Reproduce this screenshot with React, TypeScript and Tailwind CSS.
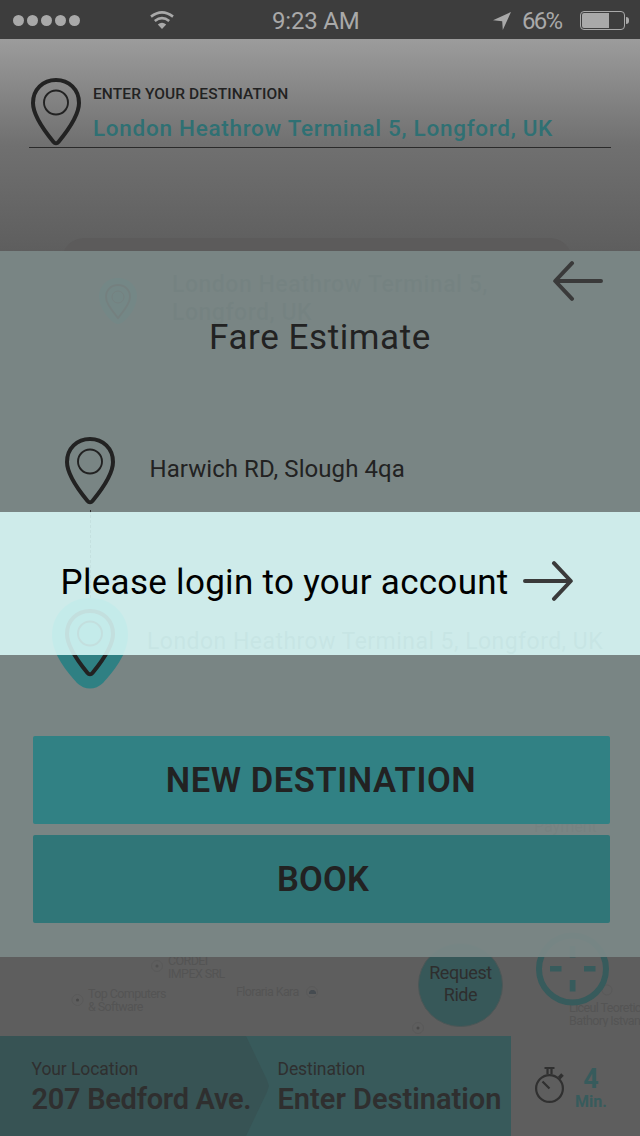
function Pin({ className = "" }: { className?: string }) {
  return (
    <svg viewBox="0 0 50 68" className={`h-[68px] w-[50px] shrink-0 ${className}`} fill="none" stroke="#222" strokeLinejoin="round">
      <path strokeWidth="4" d="M25 2C12 2 2 11.500 2 25C2 39 16 56 22.300 63.700Q25 67 27.700 63.700C34 56 48 39 48 25C48 11.500 38 2 25 2Z" />
      <circle cx="25" cy="24.500" r="12" strokeWidth="1.900" />
    </svg>
  );
}

function Arrow({ className = "" }: { className?: string }) {
  return (
    <svg viewBox="0 0 50 40" className={`h-10 w-[50px] shrink-0 ${className}`} fill="none" stroke="#3a3a3a" strokeWidth="4" strokeLinecap="round" strokeLinejoin="round">
      <path d="M2 20H47.500M31 2.200L47.800 20L31 37.800" />
    </svg>
  );
}

function StatusBar() {
  return (
    <div className="flex h-[39px] shrink-0 items-center bg-[#3d3d3d] pl-[13px] text-[24px] leading-[39px] text-[#a9a9a9]">
      <div className="flex w-[137px] gap-[3px] pt-[2px]">
        {[0, 1, 2, 3, 4].map((i) => (
          <span key={i} className="size-[11px] rounded-full bg-[#a9a9a9]" />
        ))}
      </div>
      <svg viewBox="0 0 24 18" className="h-[18px] w-6" fill="none" stroke="#a9a9a9" strokeWidth="2.600">
        <path d="M1 5.600Q12 -2.800 23 5.600" />
        <path d="M4.800 10Q12 4.400 19.200 10" />
        <path d="M7.800 13.600Q12 10 16.200 13.600L12 18Z" fill="#a9a9a9" stroke="none" />
      </svg>
      <span className="ml-[98px] mt-[3px] w-[90px] tracking-[-0.2px]">9:23 AM</span>
      <svg viewBox="0 0 18 18" className="ml-[131px] mt-[2px] h-[18px] w-[18px]" fill="#a9a9a9">
        <path d="M18 0L9.800 18L9.200 9.300L0 8.200Z" />
      </svg>
      <span className="ml-[11px] mt-[3px] w-[46px] tracking-[-1.8px]">66%</span>
      <div className="ml-[12px] mt-[2px] flex h-[19px] w-[45px] rounded-[4px] border border-[#a9a9a9] p-px">
        <span className="w-[27px] rounded-l-[2px] bg-[#a9a9a9]" />
      </div>
      <span className="ml-px mt-[2px] h-[7px] w-[3px] rounded-r-full bg-[#a9a9a9]" />
    </div>
  );
}

function MapLayer() {
  return (
    <div className="absolute inset-0 text-[12.5px] leading-[13px] tracking-[-0.6px] text-[#545454]">
      <div className="absolute left-[62px] top-[238px] h-[110px] w-[510px] rounded-[22px] bg-[#5c5b5b] text-[23px] font-medium leading-[28px] tracking-[0.53px] text-[#2a3a3a]">
        <svg viewBox="0 0 38 46" className="absolute left-[37px] top-[40px] h-[46px] w-[38px]" fill="none">
          <path fill="#1f7275" d="M19 0C8 0 0 8 0 18C0 30 9 40 14 44Q19 48 24 44C29 40 38 30 38 18C38 8 30 0 19 0Z" />
          <path stroke="#222" strokeWidth="2" d="M19 7C12 7 7 12 7 19C7 26 14 34 19 40C24 34 31 26 31 19C31 12 26 7 19 7Z" />
          <circle cx="19" cy="19" r="6" stroke="#222" />
        </svg>
        <p className="absolute left-[110px] top-[33px] whitespace-nowrap">London Heathrow Terminal 5,<br />Longford, UK</p>
      </div>
      <span className="absolute left-[534px] top-[817px] text-[16px] leading-5 tracking-normal text-[#333]">Payment</span>
      <span className="absolute left-[168px] top-[954px]">CORDEI<br />IMPEX SRL</span>
      <span className="absolute left-[88px] top-[987px]">Top Computers<br />&amp; Software</span>
      <span className="absolute left-[236px] top-[985px]">Floraria Kara</span>
      <svg viewBox="0 0 640 1136" className="absolute inset-0 h-full w-full" fill="none" stroke="#595959">
        <circle cx="157" cy="966" r="5.500" />
        <circle cx="157" cy="966" r="1.500" fill="#505050" stroke="none" />
        <circle cx="77.500" cy="1000" r="5.500" />
        <circle cx="77.500" cy="1000" r="1.500" fill="#484848" stroke="none" />
        <circle cx="312" cy="992" r="5.500" />
        <path d="M309 994v-2l2-2h3l2 2v2z" fill="#454b50" stroke="none" />
        <circle cx="418" cy="1028" r="5.500" />
        <circle cx="418" cy="1028" r="1.500" fill="#484848" stroke="none" />
        <circle cx="607" cy="990" r="5" />
      </svg>
      <span className="absolute left-[569px] top-[1001px] w-[71px] overflow-hidden whitespace-nowrap">Liceul Teoretic<br />Bathory Istvan</span>
      <div className="absolute left-[418px] top-[943px] flex h-[84px] w-[85px] flex-col items-center rounded-full border border-[#4c5757] bg-[#375859] pt-[18px] text-[18px] leading-[22px] tracking-[-0.4px] text-[#2e2e2e]">
        <span>Request</span>
        <span>Ride</span>
      </div>
      <svg viewBox="0 0 74 74" className="absolute left-[536px] top-[932px] h-[74px] w-[74px]">
        <circle cx="36.500" cy="37" r="33.500" fill="none" stroke="#375b5c" strokeWidth="6" />
        <path fill="#375b5c" d="M14 34H25.500V39.500H14ZM48 34H59.500V39.500H48ZM33.800 48H39.500V59.500H33.800ZM33.800 14H39.500V25.500H33.800Z" />
      </svg>
    </div>
  );
}

export default function App() {
  return (
    <div className="relative flex h-[1136px] w-[640px] flex-col overflow-hidden bg-[#5e5e5e] font-['Roboto',sans-serif] text-[#222]">
      <StatusBar />
      <header className="h-[212px] shrink-0 bg-linear-to-b from-[#9c9c9c] via-[#707070] to-[#5e5e5e] pt-[39px]">
        <div className="ml-[29px] flex h-[70px] w-[582px] border-b border-[#2a2a2a]">
          <Pin className="ml-[2px]" />
          <div className="ml-[12px] whitespace-nowrap pt-[6px] font-medium">
            <p className="text-[15.5px] leading-5 tracking-[0.1px]">ENTER YOUR DESTINATION</p>
            <p className="mt-[10px] text-[22.5px] leading-7 tracking-[0.71px] text-[#2f7073]">London Heathrow Terminal 5, Longford, UK</p>
          </div>
        </div>
      </header>
      <MapLayer />
      <main className="relative h-[706px] shrink-0 bg-[#7c8988]/92">
        <div className="flex h-[50px] justify-end pr-[37px] pt-[10px]">
          <Arrow className="rotate-180" />
        </div>
        <h1 className="mt-[17px] text-center text-[35px] leading-10 tracking-[0.58px]">Fare Estimate</h1>
        <div className="mt-[79px] flex h-[73px] pl-[65px]">
          <Pin />
          <p className="ml-[34.500px] pt-[18px] text-[24px] leading-7 tracking-[0.06px]">Harwich RD, Slough 4qa</p>
        </div>
        <div className="ml-[90px] h-[88px] w-0 border-l border-dashed border-[#333]" />
        <div className="flex h-[91px] pl-[52px]">
          <div className="relative h-[91px] w-[76px] shrink-0">
            <svg viewBox="0 0 76 91" className="absolute inset-0 h-[91px] w-[76px]">
              <path fill="#2f8083" d="M38 0C16 0 0 16 0 37C0 56 15 74 25 85Q31 90.500 38 90.500Q45 90.500 51 85C61 74 76 56 76 37C76 16 60 0 38 0Z" />
            </svg>
            <Pin className="absolute left-[13px] top-[11px]" />
          </div>
          <p className="ml-[19px] whitespace-nowrap pt-[30px] text-[23px] leading-7 tracking-[0.46px] text-[#465050]">London Heathrow Terminal 5, Longford, UK</p>
        </div>
        <div className="ml-[33px] mt-[47px] flex w-[577px] flex-col gap-[11px] text-[34.5px] font-semibold leading-[88px]">
          <button className="h-[88px] rounded-[2px] bg-[#318184] pr-[1px] tracking-[0.58px]">NEW DESTINATION</button>
          <button className="h-[88px] rounded-[2px] bg-[#307678] pl-[3px] tracking-[0.18px]">BOOK</button>
        </div>
        <div className="absolute left-0 top-[261px] flex h-[143px] w-full bg-[#daf9f8]/88 pl-[60.500px] pt-[49px]">
          <p className="mt-[2px] w-[462.500px] whitespace-nowrap text-[35px] leading-10 tracking-[0.3px] text-black">Please login to your account</p>
          <Arrow />
        </div>
      </main>
      <div className="h-[79px] shrink-0" />
      <footer className="relative flex h-[100px] shrink-0 bg-[#5e5e5e] text-[#2f2f2f]">
        <div className="flex w-[511px] bg-[#385a5b]">
          <div className="w-[269px] whitespace-nowrap bg-[#375354] pl-[31.500px] pt-[21px] [clip-path:polygon(0_0,246px_0,267px_44%,269px_50%,267px_56%,246px_100%,0_100%)]">
            <p className="text-[17.5px] leading-6 tracking-[-0.07px]">Your Location</p>
            <p className="mt-[2px] text-[29px] font-semibold leading-8 tracking-[-0.3px]">207 Bedford Ave.</p>
          </div>
          <div className="whitespace-nowrap pl-[8.500px] pt-[21px]">
            <p className="text-[17.5px] leading-6 tracking-[-0.09px]">Destination</p>
            <p className="mt-[2px] text-[29px] font-semibold leading-8">Enter Destination</p>
          </div>
        </div>
        <svg viewBox="0 0 30 38" className="ml-[24px] mt-[30px] h-[38px] w-[30px]" fill="none" stroke="#303030" strokeWidth="2.200">
          <circle cx="14.500" cy="22.500" r="13.400" />
          <path d="M9.500 2H19.500M12.500 2V8M16.500 2V8M7.500 15.500L14.500 22.500" />
          <path strokeWidth="3.500" d="M24.200 12L27.500 8.500" />
        </svg>
        <div className="ml-[6px] flex w-[40px] flex-col items-center pt-[30px] font-bold text-[#375b5c]">
          <span className="text-[27px] leading-[26px]">4</span>
          <span className="text-[16px] leading-5">Min.</span>
        </div>
      </footer>
    </div>
  );
}
